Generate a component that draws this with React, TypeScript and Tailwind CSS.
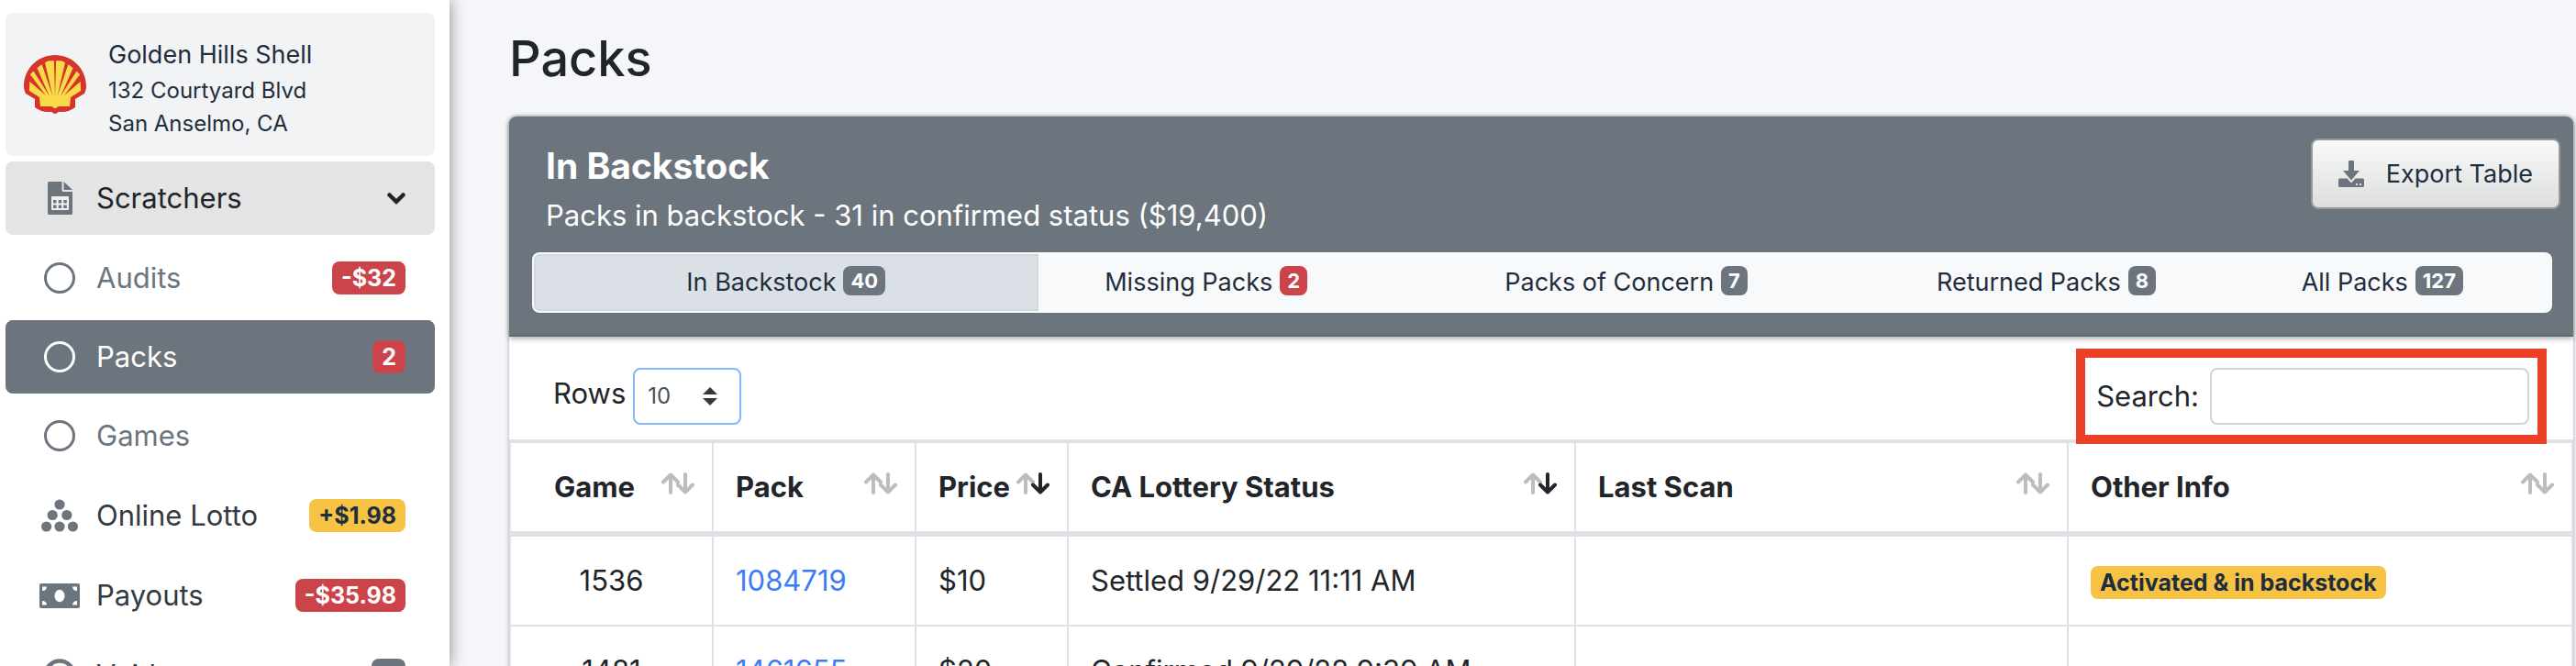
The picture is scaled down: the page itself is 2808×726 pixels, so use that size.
import type { ReactNode } from "react";

const muted = "#6c757d";

function ShellLogo() {
  return (
    <svg viewBox="0 0 68 64" className="h-16 w-[68px] shrink-0" aria-hidden="true">
      <path
        d="M34 0C15 0 0 15 0 34c0 3 1 6 2 8l10 6 0 9c4 3 9 5 14 5h4c1 0 2 2 4 2s3-2 4-2h4c5 0 10-2 14-5v-9l10-6c1-2 2-5 2-8C68 15 53 0 34 0z"
        fill="#d5352c"
      />
      <path
        d="M34 6l-8 .6L20 10l-7 5-6 6-1 13 0 5 11 7 1 10h12c1 0 2 2 4 2s3-2 4-2h12l1-10 11-7 0-5-1-13-6-6-7-5-6-3.400z"
        fill="#f9db4a"
      />
      <path
        d="M34 46L32.800 5h2.400zM31.500 45L22.500 6l-3.500 2.500zM36.500 45L45.500 6l3.500 2.500zM28 45L13.500 12l-4 4zM40 45L54.500 12l4 4zM24 44L6 20l-2 7zM44 44L62 20l2 7z"
        fill="#d5352c"
      />
    </svg>
  );
}

function SheetIcon() {
  return (
    <svg viewBox="0 0 27 36" className="h-9 w-[27px]" aria-hidden="true">
      <path d="M1.500 0H15.500v9.500a1.500 1.500 0 0 0 1.500 1.500h10v23.500a1.500 1.500 0 0 1-1.500 1.500h-24A1.500 1.500 0 0 1 0 34.500v-33A1.500 1.500 0 0 1 1.500 0zM17.500 0l9.500 9h-9.500z" fill={muted} />
      <rect x="4" y="16" width="19" height="15" rx="1" fill="#f1f1f1" />
      <path d="M6 20h3.500v3.500H6zM11.700 20h3.500v3.500h-3.500zM17.300 20h3.500v3.500h-3.500zM6 25.500h3.500V29H6zM11.700 25.500h3.500V29h-3.500zM17.300 25.500h3.500V29h-3.500z" fill={muted} />
    </svg>
  );
}

function CircleIcon() {
  return (
    <svg viewBox="0 0 34 34" className="size-[34px]" aria-hidden="true">
      <circle cx="17" cy="17" r="15.500" fill="none" stroke="currentColor" strokeWidth="3" />
    </svg>
  );
}

function BanIcon() {
  return (
    <svg viewBox="0 0 36 36" className="size-9" aria-hidden="true" fill="none" stroke={muted} strokeWidth="4.500">
      <circle cx="18" cy="18" r="15.500" />
      <path d="M7 7l22 22" />
    </svg>
  );
}

function BallsIcon() {
  return (
    <svg viewBox="0 0 40 36" className="h-9 w-10" aria-hidden="true" fill={muted}>
      <circle cx="20" cy="6" r="5.600" />
      <circle cx="12.200" cy="17.500" r="5.600" />
      <circle cx="27.800" cy="17.500" r="5.600" />
      <circle cx="5.600" cy="30" r="5.600" />
      <circle cx="20" cy="30" r="5.600" />
      <circle cx="34.400" cy="30" r="5.600" />
    </svg>
  );
}

function BillIcon() {
  return (
    <svg viewBox="0 0 44 27" className="h-[27px] w-11" aria-hidden="true">
      <rect width="44" height="27" rx="2" fill={muted} />
      <ellipse cx="22" cy="13.500" rx="5.500" ry="6.800" fill="#fff" />
      <path d="M3 3.500h5a5 5 0 0 1-5 4.500zM41 3.500h-5a5 5 0 0 0 5 4.500zM3 23.500h5A5 5 0 0 0 3 19zM41 23.500h-5a5 5 0 0 1 5-4.500z" fill="#fff" />
    </svg>
  );
}

function ExportIcon() {
  return (
    <svg viewBox="0 0 28 29" className="h-[29px] w-7" aria-hidden="true" fill={muted}>
      <path d="M12 0h4a1 1 0 0 1 1 1v10h6L14 21.500 5 11h6V1a1 1 0 0 1 1-1z" />
      <path d="M1.500 19.500H9.500L14 24.500l4.500-5h8A1.500 1.500 0 0 1 28 21v6.500a1.500 1.500 0 0 1-1.500 1.500h-25A1.500 1.500 0 0 1 0 27.500V21a1.500 1.500 0 0 1 1.500-1.500z" />
      <circle cx="20" cy="26" r="1.100" fill="#fff" />
      <circle cx="24" cy="26" r="1.100" fill="#fff" />
    </svg>
  );
}

function SortIcon({ active = false }: { active?: boolean }) {
  return (
    <svg viewBox="0 0 36 24" className="h-6 w-9 shrink-0" aria-hidden="true" fill="none" strokeWidth="4" strokeLinecap="round" strokeLinejoin="round">
      <path d="M10 22V3M2 10.500L10 2.500l8 8" stroke="#bcbdbf" />
      <path d="M26 2v19M18 13.500l8 8 8-8" stroke={active ? "#212529" : "#bcbdbf"} />
    </svg>
  );
}

const tones = {
  red: "bg-[#cb444a] text-white",
  gray: "bg-[#6c757d] text-white",
  yellow: "bg-[#f6c344] text-[#1f2d3d]",
};
type Tone = keyof typeof tones;

function Badge({ tone, children }: { tone: Tone; children: ReactNode }) {
  return (
    <span className={`inline-block h-9 rounded-lg px-2.5 text-center text-[25px] leading-9 font-bold whitespace-nowrap ${tones[tone]}`}>
      {children}
    </span>
  );
}

type NavProps = { icon: ReactNode; label: string; look: string; badge?: ReactNode };

function NavItem({ icon, label, look, badge }: NavProps) {
  return (
    <a href="#" className={`flex h-20 items-center rounded-lg pr-8 pl-[37px] ${look}`}>
      <span className="flex w-11 shrink-0 justify-center">{icon}</span>
      <span className="ml-[18px] flex-1 whitespace-nowrap">{label}</span>
      {badge}
    </a>
  );
}

function Sidebar() {
  return (
    <aside className="z-10 w-[490px] shrink-0 bg-white px-1.5 pt-3.5 pr-4 shadow-[0_0_16px_rgba(0,0,0,0.45)]">
      <div className="flex h-[156px] items-center gap-6 rounded-lg bg-[#f2f3f5] pl-5 text-2xl leading-9 text-[#1f2d3d]">
        <ShellLogo />
        <div className="pt-2">
          <div className="text-[27px] leading-[42px]">Golden Hills Shell</div>
          <div>132 Courtyard Blvd</div>
          <div>San Anselmo, CA</div>
        </div>
      </div>
      <nav className="mt-1.5 flex flex-col gap-[7px] text-[31px] leading-[48px]">
        <NavItem
          icon={<SheetIcon />}
          label="Scratchers"
          look="bg-[#e4e4e4] text-[#212529]"
          badge={
            <svg viewBox="0 0 20 13" className="h-[13px] w-5" aria-hidden="true">
              <path d="M2.500 2.500l7.500 7.300 7.500-7.300" fill="none" stroke="#212529" strokeWidth="4.500" strokeLinecap="round" />
            </svg>
          }
        />
        <div className="flex flex-col gap-1.5">
          <NavItem icon={<CircleIcon />} label="Audits" look="text-[#6c757d]" badge={<Badge tone="red">-$32</Badge>} />
          <NavItem icon={<CircleIcon />} label="Packs" look="bg-[#6c757d] text-white" badge={<Badge tone="red">2</Badge>} />
          <NavItem icon={<CircleIcon />} label="Games" look="text-[#6c757d]" />
        </div>
        <NavItem icon={<BallsIcon />} label="Online Lotto" look="text-[#343a40]" badge={<Badge tone="yellow">+$1.98</Badge>} />
        <NavItem icon={<BillIcon />} label="Payouts" look="text-[#343a40]" badge={<Badge tone="red">-$35.98</Badge>} />
        <NavItem icon={<BanIcon />} label="Voids" look="text-[#343a40]" badge={<Badge tone="gray">0</Badge>} />
      </nav>
    </aside>
  );
}

const tabs: { label: string; count: number; tone: Tone }[] = [
  { label: "In Backstock", count: 40, tone: "gray" },
  { label: "Missing Packs", count: 2, tone: "red" },
  { label: "Packs of Concern", count: 7, tone: "gray" },
  { label: "Returned Packs", count: 8, tone: "gray" },
  { label: "All Packs", count: 127, tone: "gray" },
];

const columns = [
  { label: "Game", width: "w-[221px]" },
  { label: "Pack", width: "w-[221px]" },
  { label: "Price", width: "w-[166px]", sorted: true },
  { label: "CA Lottery Status", width: "", sorted: true },
  { label: "Last Scan", width: "w-[537px]" },
  { label: "Other Info", width: "w-[552px]" },
];

const rows = [
  { game: "1536", pack: "1084719", price: "$10", status: "Settled 9/29/22 11:11 AM", info: "Activated & in backstock" },
  { game: "1481", pack: "1461655", price: "$20", status: "Confirmed 9/29/22 9:39 AM", info: "" },
];

const cell = "border-b-2 border-l-2 border-[#dee2e6] px-6 last:border-r-2";

export default function App() {
  return (
    <div className="flex h-screen overflow-hidden bg-[#f4f6f9] font-['Inter','Liberation_Sans',sans-serif] text-[#212529]">
      <Sidebar />
      <main className="min-w-0 flex-1 pr-[3px] pl-[65px]">
        <h1 className="pt-7 pb-[27px] text-[54px] leading-[72px] font-medium">Packs</h1>
        <section className="rounded-t-lg bg-white shadow-[0_0_4px_rgba(0,0,0,0.35)]">
          <header className="h-60 rounded-t-lg border-b-2 border-[#61696f] bg-[#6c757d] pt-6 pr-[14px] pl-[25px] shadow-[0_2px_6px_rgba(0,0,0,0.35)]">
            <div className="flex h-[124px] items-start justify-between text-white">
              <div className="pl-[15px]">
                <h2 className="pt-0.5 text-[39px] leading-[56px] font-bold">In Backstock</h2>
                <p className="pt-0.5 text-[31px] leading-[48px]">Packs in backstock - 31 in confirmed status ($19,400)</p>
              </div>
              <button
                type="button"
                className="flex h-[77px] items-center gap-6 rounded-lg border-2 border-[#999] bg-linear-to-b from-[#f8f9fa] to-[#dddfde] px-7 text-[27px] leading-[42px] text-[#1f2d3d]"
              >
                <ExportIcon />
                Export Table
              </button>
            </div>
            <div className="mr-[9px] grid h-[66px] grid-cols-[3fr_2fr_3fr_2fr_2fr] rounded-lg bg-[#f8f9fa] p-0.5 text-[27px] leading-[42px] text-[#1f2d3d]">
              {tabs.map((tab, i) => (
                <button
                  key={tab.label}
                  type="button"
                  className={`flex items-center justify-center gap-2 whitespace-nowrap ${i === 0 ? "rounded-l-md border-2 border-[#d3d9df] bg-[#dae0e5]" : ""}`}
                >
                  {tab.label}
                  <span className={`mb-1 h-8 rounded-lg px-2 text-[22px] leading-8 font-bold ${tones[tab.tone]}`}>{tab.count}</span>
                </button>
              ))}
            </div>
          </header>
          <div className="flex h-28 items-start justify-between pt-[34px] pr-12 pl-12 text-[31px] leading-[48px]">
            <label className="flex items-center gap-2">
              <span className="pb-1.5">Rows</span>
              <span className="relative">
                <select defaultValue="10" className="block h-[62px] w-[118px] appearance-none rounded-lg border-2 border-[#85b7fb] bg-white pl-3.5 text-2xl text-[#495057]">
                  <option>10</option>
                  <option>25</option>
                  <option>50</option>
                </select>
                <svg viewBox="0 0 16 20" className="pointer-events-none absolute top-[21px] right-[26px] h-5 w-4" aria-hidden="true">
                  <path d="M0 8l8-8 8 8zM0 12l8 8 8-8z" fill="#343a40" />
                </svg>
              </span>
            </label>
            <div className="relative">
              <label className="flex items-center gap-3">
                <span>Search:</span>
                <input type="search" className="h-[62px] w-[348px] rounded-lg border-2 border-[#ced4da] bg-white px-4 text-2xl" />
              </label>
              <div className="pointer-events-none absolute -top-[21px] -right-[19px] -bottom-[21px] -left-[22px] border-10 border-[#ea4025]" />
            </div>
          </div>
          <table className="w-full table-fixed border-separate border-spacing-0 text-[31px] leading-[46px]">
            <thead>
              <tr>
                {columns.map((col) => (
                  <th
                    key={col.label}
                    className={`h-[106px] border-t-4 border-b-6 border-l-2 border-[#dee2e6] pr-[19px] pl-6 text-left font-bold first:pl-[47px] last:border-r-2 ${col.width}`}
                  >
                    <span className="flex items-center justify-between whitespace-nowrap">
                      {col.label}
                      <span className="-ml-2 pb-2">
                        <SortIcon active={col.sorted} />
                      </span>
                    </span>
                  </th>
                ))}
              </tr>
            </thead>
            <tbody>
              {rows.map((row) => (
                <tr key={row.game} className="h-[98px] whitespace-nowrap">
                  <td className={`text-center ${cell}`}>{row.game}</td>
                  <td className={cell}>
                    <a href="#" className="text-[#3b7cf5]">{row.pack}</a>
                  </td>
                  <td className={cell}>{row.price}</td>
                  <td className={cell}>{row.status}</td>
                  <td className={cell} />
                  <td className={cell}>{row.info && <Badge tone="yellow">{row.info}</Badge>}</td>
                </tr>
              ))}
            </tbody>
          </table>
        </section>
      </main>
    </div>
  );
}
